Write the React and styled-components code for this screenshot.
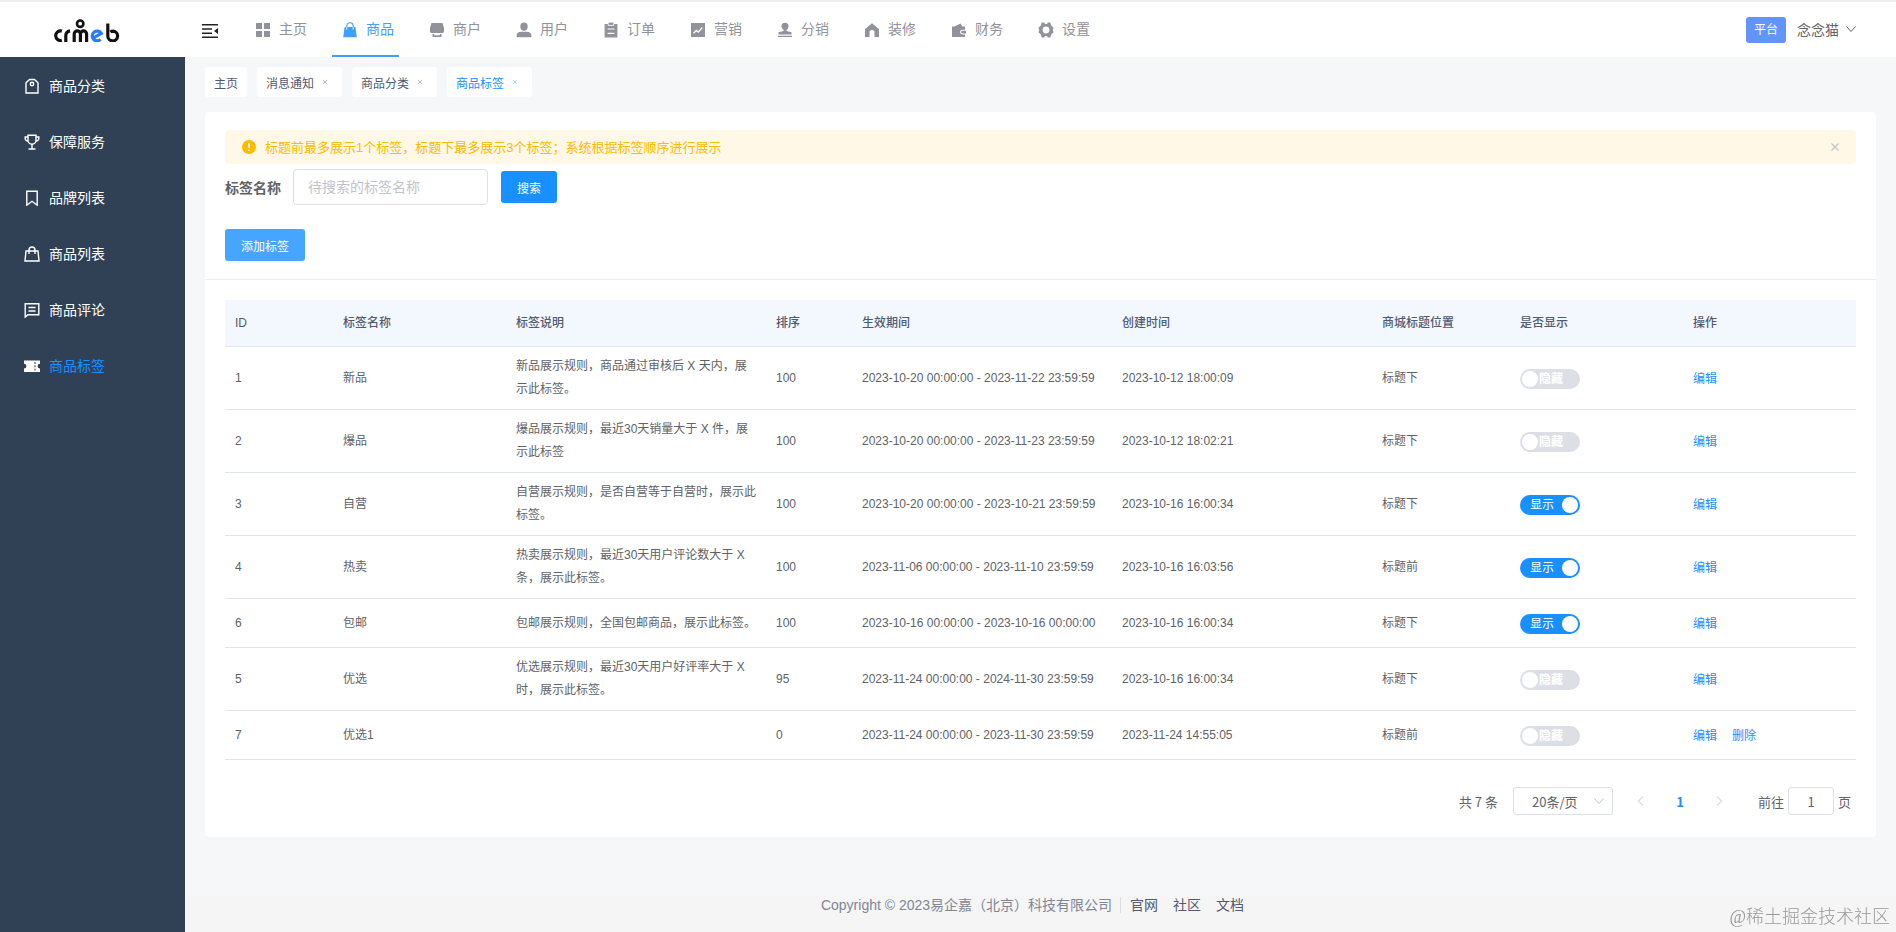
import React, { useState } from 'react';
import styled, { createGlobalStyle } from 'styled-components';

const navItems = [
    { key: 'home', label: '主页' },
    { key: 'goods', label: '商品' },
    { key: 'shop', label: '商户' },
    { key: 'user', label: '用户' },
    { key: 'order', label: '订单' },
    { key: 'marketing', label: '营销' },
    { key: 'spread', label: '分销' },
    { key: 'decorate', label: '装修' },
    { key: 'finance', label: '财务' },
    { key: 'setting', label: '设置' },
];

const menuItems = [
    { key: 'tag', label: '商品分类' },
    { key: 'trophy', label: '保障服务' },
    { key: 'bookmark', label: '品牌列表' },
    { key: 'bag', label: '商品列表' },
    { key: 'comment', label: '商品评论' },
    { key: 'ticket', label: '商品标签' },
];

const tabs = [
    { label: '主页' },
    { label: '消息通知', closable: true },
    { label: '商品分类', closable: true },
    { label: '商品标签', closable: true, active: true },
];

const columns = [
    { title: 'ID', width: 108 },
    { title: '标签名称', width: 173 },
    { title: '标签说明', width: 260 },
    { title: '排序', width: 86 },
    { title: '生效期间', width: 260 },
    { title: '创建时间', width: 260 },
    { title: '商城标题位置', width: 138 },
    { title: '是否显示', width: 173 },
    { title: '操作', width: 173 },
];

const labelRows = [
    { id: 1, name: '新品', info: '新品展示规则，商品通过审核后 X 天内，展示此标签。', sort: 100, period: '2023-10-20 00:00:00 - 2023-11-22 23:59:59', created: '2023-10-12 18:00:09', position: '标题下', show: false },
    { id: 2, name: '爆品', info: '爆品展示规则，最近30天销量大于 X 件，展示此标签', sort: 100, period: '2023-10-20 00:00:00 - 2023-11-23 23:59:59', created: '2023-10-12 18:02:21', position: '标题下', show: false },
    { id: 3, name: '自营', info: '自营展示规则，是否自营等于自营时，展示此标签。', sort: 100, period: '2023-10-20 00:00:00 - 2023-10-21 23:59:59', created: '2023-10-16 16:00:34', position: '标题下', show: true },
    { id: 4, name: '热卖', info: '热卖展示规则，最近30天用户评论数大于 X 条，展示此标签。', sort: 100, period: '2023-11-06 00:00:00 - 2023-11-10 23:59:59', created: '2023-10-16 16:03:56', position: '标题前', show: true },
    { id: 6, name: '包邮', info: '包邮展示规则，全国包邮商品，展示此标签。', sort: 100, period: '2023-10-16 00:00:00 - 2023-10-16 00:00:00', created: '2023-10-16 16:00:34', position: '标题下', show: true },
    { id: 5, name: '优选', info: '优选展示规则，最近30天用户好评率大于 X 时，展示此标签。', sort: 95, period: '2023-11-24 00:00:00 - 2024-11-30 23:59:59', created: '2023-10-16 16:00:34', position: '标题下', show: false },
    { id: 7, name: '优选1', info: '', sort: 0, period: '2023-11-24 00:00:00 - 2023-11-30 23:59:59', created: '2023-11-24 14:55:05', position: '标题前', show: false, removable: true },
];

const navShapes = {
    home: <path d="M1 1h6v6H1zM9 1h6v6H9zM1 9h6v6H1zM9 9h6v6H9z" />,
    goods: (
        <>
            <path d="M2.6 5h10.8l1.4 10.2H1.2z" />
            <path d="M4.8 7.5V4a3.2 3.2 0 0 1 6.4 0v3.5" fill="none" stroke="currentColor" strokeWidth="1.1" />
            <path d="M4.8 5.2v2.3M11.2 5.2v2.3" stroke="#fff" />
        </>
    ),
    shop: (
        <>
            <path d="M2.5 1h11L15 6v3.6c0 .8-.6 1.4-1.4 1.4H2.4C1.6 11 1 10.4 1 9.600V6z" />
            <path d="M3.5 12h1.7v1.3h5.6V12h1.7v3h-9z" />
        </>
    ),
    user: (
        <>
            <ellipse cx="8" cy="4.6" rx="3.7" ry="4.2" />
            <path d="M.6 15.3v-1.9c0-2.300 2-3.600 4.400-3.600h6c2.400 0 4.400 1.300 4.400 3.600v1.900z" />
        </>
    ),
    order: (
        <>
            <path d="M1.600 2h3.200v1.800h6.400V2h3.200v13.500H1.600z" />
            <path d="M5.600.6h4.800v2.300H5.600z" />
            <path d="M4.600 7h6.800M4.600 11.300h6.800" stroke="#fff" strokeWidth="1.200" />
        </>
    ),
    marketing: (
        <>
            <path d="M1 1h14v14H1z" />
            <path d="M3.500 11.300 6.300 8.500l2 1.700 4-4.700" fill="none" stroke="#fff" strokeWidth="1.300" />
        </>
    ),
    spread: (
        <>
            <circle cx="8" cy="4.200" r="3.500" />
            <path d="M6.500 6h3v3l5 1.300v2.200h-13v-2.200l5-1.300zM1 13.700h14V15H1z" />
        </>
    ),
    decorate: <path d="M8 1.200 15 7v8h-4.500v-4.500a2.500 2.500 0 0 0-5 0V15H1V7z" />,
    finance: (
        <>
            <path d="M1 4.500h2.500l6-3 2 3H14v3.200h-2.600a2.400 2.400 0 0 0 0 4.800H14V15H1z" />
            <path d="M11.500 8.700H15v2.800h-3.500a1.400 1.400 0 0 1 0-2.800z" />
        </>
    ),
    setting: (
        <path
            fillRule="evenodd"
            d="M3.700.6h2.500l.8 1.500h2L9.800.6h2.500l.8 3 2.500 2.200-.9 2.200.9 2.200-2.500 2.200-.8 3H9.800L9 13.900H7l-.8 1.500H3.700l-.8-3-2.500-2.200.9-2.200-.9-2.200 2.500-2.200zM8 4.600a3.400 3.400 0 1 0 0 6.800 3.400 3.400 0 0 0 0-6.800z"
        />
    ),
};

const menuShapes = {
    tag: (
        <>
            <path d="M2 15V4.800L5.600 1.500h4.800L14 4.800V15z" />
            <circle cx="8" cy="6" r="1.700" />
        </>
    ),
    trophy: (
        <>
            <path d="M4 1.300h8v4.900a4 4 0 0 1-8 0z" />
            <path d="M4 3H1.200v1.600A2.700 2.700 0 0 0 4.200 7M12 3h2.800v1.600A2.700 2.700 0 0 1 11.800 7M8 10.300v4.500M4.500 15h7" />
        </>
    ),
    bookmark: <path d="M2.800 1.200h10.400v14L8 11.300l-5.200 3.900z" />,
    bag: (
        <>
            <path d="M2 5h12l1 10H1z" />
            <path d="M5 8V4a3 3 0 0 1 6 0v4" />
        </>
    ),
    comment: (
        <>
            <path d="M1.200 15.200V1.800h13.600v11H3.800z" />
            <path d="M4.500 5.500h7M4.500 9h7" />
        </>
    ),
    ticket: (
        <>
            <path d="M0 2.500h16v3.300a2.300 2.300 0 0 0 0 4.800v3.400H0v-3.400a2.300 2.300 0 0 0 0-4.800z" fill="currentColor" stroke="none" />
            <path d="M11 4v2m0 1.300v2m0 1.300v2" stroke="#304156" strokeWidth="1" />
        </>
    ),
};

const Logo = () => (
    <svg width="68" height="25" viewBox="0 0 68 25" fill="none" stroke="#111" strokeWidth="3.200" role="img" aria-label="crmeb">
        <path d="M8.800 14.100a4.800 4.800 0 0 0-6.100 4.900 4.800 4.800 0 0 0 6.100 4.300" />
        <path d="M12.800 25v-6.200c0-2.600 1.600-4.400 4.200-4.900" />
        <path d="M21.200 25v-8a3.100 3.100 0 0 1 6.200 0v8M27.400 17a3.100 3.100 0 0 1 6.200 0v8" />
        <circle cx="27.200" cy="6.700" r="3.200" strokeWidth="2.600" />
        <path d="M40.500 20.800l7.800-4.400A4.900 4.900 0 1 0 47.600 22.400" stroke="#2d7cf6" />
        <path d="M54.800 6.500V19a4.900 4.900 0 1 0 5.400-4.900c-1.200 0-2 .3-2.800.9" />
    </svg>
);

const Chevron = ({ size = 12, direction = 'down' }) => {
    const d = {
        down: 'M1.500 3.500 6 8.500l4.500-5',
        left: 'M8 1.500 3.500 6 8 10.500',
        right: 'M4 1.500 8.500 6 4 10.500',
    }[direction];
    return (
        <svg width={size} height={size} viewBox="0 0 12 12" fill="none" stroke="currentColor" aria-hidden="true">
            <path d={d} />
        </svg>
    );
};

const Cross = ({ size }) => (
    <svg width={size} height={size} viewBox="0 0 10 10" fill="none" stroke="currentColor" strokeWidth="1.200" aria-hidden="true">
        <path d="M1.500 1.500l7 7M8.500 1.500l-7 7" />
    </svg>
);

const App = () => {
    const [rows, setRows] = useState(labelRows);
    const [keyword, setKeyword] = useState('');
    const [alertOpen, setAlertOpen] = useState(true);

    const toggleShow = (id) => {
        setRows(rows.map((row) => (row.id === id ? { ...row, show: !row.show } : row)));
    };

    return (
        <>
            <GlobalStyle />
            <Page>
                <Header>
                    <LogoBox>
                        <Logo />
                    </LogoBox>
                    <FoldButton type="button" aria-label="收起菜单">
                        <svg width="16" height="16" viewBox="0 0 16 16" fill="currentColor">
                            <path d="M0 1h16v1.500H0zM0 5.300h10v1.500H0zM0 9.600h10v1.500H0zM0 13.500h16V15H0zM16 5v6l-4-3z" />
                        </svg>
                    </FoldButton>
                    <Nav>
                        {navItems.map((item) => (
                            <NavLink href="#" key={item.key} $active={item.key === 'goods'}>
                                <svg width="16" height="16" viewBox="0 0 16 16" fill="currentColor" aria-hidden="true">
                                    {navShapes[item.key]}
                                </svg>
                                <span>{item.label}</span>
                            </NavLink>
                        ))}
                    </Nav>
                    <Account>
                        <Badge>平台</Badge>
                        <AccountButton type="button">
                            念念猫
                            <Chevron />
                        </AccountButton>
                    </Account>
                </Header>

                <Body>
                    <Sidebar>
                        {menuItems.map((item) => (
                            <MenuLink href="#" key={item.key} $active={item.key === 'ticket'}>
                                <svg width="16" height="16" viewBox="0 0 16 16" fill="none" stroke="currentColor" strokeWidth="1.400" aria-hidden="true">
                                    {menuShapes[item.key]}
                                </svg>
                                <span>{item.label}</span>
                            </MenuLink>
                        ))}
                    </Sidebar>

                    <Main>
                        <TabBar>
                            {tabs.map((tab) => (
                                <Tab key={tab.label} $active={tab.active} $closable={tab.closable}>
                                    <a href="#">{tab.label}</a>
                                    {tab.closable && (
                                        <PlainButton type="button" aria-label={`关闭${tab.label}`}>
                                            <Cross size={6} />
                                        </PlainButton>
                                    )}
                                </Tab>
                            ))}
                        </TabBar>

                        <Card>
                            <CardTop>
                                {alertOpen && (
                                    <Alert role="alert">
                                        <svg width="16" height="16" viewBox="0 0 16 16" aria-hidden="true">
                                            <circle cx="8" cy="8" r="7" fill="currentColor" />
                                            <path d="M8 4v5M8 10.500v1.600" stroke="#fff" strokeWidth="1.600" />
                                        </svg>
                                        <AlertText>标题前最多展示1个标签，标题下最多展示3个标签；系统根据标签顺序进行展示</AlertText>
                                        <PlainButton type="button" aria-label="关闭提示" onClick={() => setAlertOpen(false)}>
                                            <Cross size={10} />
                                        </PlainButton>
                                    </Alert>
                                )}
                                <SearchForm onSubmit={(e) => e.preventDefault()}>
                                    <label htmlFor="label-name">标签名称</label>
                                    <SearchInput
                                        id="label-name"
                                        placeholder="待搜索的标签名称"
                                        value={keyword}
                                        onChange={(e) => setKeyword(e.target.value)}
                                    />
                                    <PrimaryButton type="submit">搜索</PrimaryButton>
                                </SearchForm>
                                <PrimaryButton type="button" $light>添加标签</PrimaryButton>
                            </CardTop>

                            <CardContent>
                                <Table>
                                    <colgroup>
                                        {columns.map((col) => (
                                            <Col key={col.title} $width={col.width} />
                                        ))}
                                    </colgroup>
                                    <thead>
                                        <tr>
                                            {columns.map((col) => (
                                                <Th key={col.title} scope="col">{col.title}</Th>
                                            ))}
                                        </tr>
                                    </thead>
                                    <tbody>
                                        {rows.map((row) => (
                                            <tr key={row.id}>
                                                <Td>{row.id}</Td>
                                                <Td>{row.name}</Td>
                                                <Td>{row.info}</Td>
                                                <Td>{row.sort}</Td>
                                                <Td>{row.period}</Td>
                                                <Td>{row.created}</Td>
                                                <Td>{row.position}</Td>
                                                <ControlTd>
                                                    <Switch $on={row.show}>
                                                        <input
                                                            type="checkbox"
                                                            role="switch"
                                                            checked={row.show}
                                                            onChange={() => toggleShow(row.id)}
                                                        />
                                                        <span>{row.show ? '显示' : '隐藏'}</span>
                                                    </Switch>
                                                </ControlTd>
                                                <ControlTd>
                                                    <Actions>
                                                        <a href="#">编辑</a>
                                                        {row.removable && <a href="#">删除</a>}
                                                    </Actions>
                                                </ControlTd>
                                            </tr>
                                        ))}
                                    </tbody>
                                </Table>

                                <Pagination>
                                    <span>共 7 条</span>
                                    <SelectBox>
                                        <select aria-label="每页条数" defaultValue="20">
                                            <option value="20">20条/页</option>
                                            <option value="40">40条/页</option>
                                        </select>
                                        <Chevron />
                                    </SelectBox>
                                    <Pager>
                                        <PlainButton type="button" aria-label="上一页" disabled>
                                            <Chevron direction="left" />
                                        </PlainButton>
                                        <PageNumber type="button">1</PageNumber>
                                        <PlainButton type="button" aria-label="下一页" disabled>
                                            <Chevron direction="right" />
                                        </PlainButton>
                                    </Pager>
                                    <Jump>
                                        前往
                                        <input type="text" defaultValue="1" />
                                        页
                                    </Jump>
                                </Pagination>
                            </CardContent>
                        </Card>

                        <Footer>
                            <span>Copyright © 2023易企嘉（北京）科技有限公司</span>
                            <FooterLinks>
                                <a href="#">官网</a>
                                <a href="#">社区</a>
                                <a href="#">文档</a>
                            </FooterLinks>
                        </Footer>
                    </Main>
                </Body>
                <Watermark>@稀土掘金技术社区</Watermark>
            </Page>
        </>
    );
};

export default App;

const GlobalStyle = createGlobalStyle`
  * {
    box-sizing: border-box;
  }

  body {
    margin: 0;
    background: #f5f5f5;
    color: #606266;
    font-family: "Liberation Sans", "Noto Sans CJK SC", sans-serif;
    font-size: 14px;
  }

  button, input, select {
    font-family: inherit;
    font-size: inherit;
    color: inherit;
  }

  button {
    cursor: pointer;
  }

  a {
    color: inherit;
    text-decoration: none;
  }

  svg {
    display: block;
    flex: none;
  }
`;

const Page = styled.div`
  display: flex;
  flex-direction: column;
  min-height: 100vh;
`;

const Header = styled.header`
  display: flex;
  align-items: stretch;
  height: 57px;
  padding-right: 39px;
  background: #fff;
  box-shadow: inset 0 2px 0 #f0f0f0;
`;

const LogoBox = styled.div`
  display: flex;
  align-items: center;
  width: 185px;
  padding: 2px 0 0 53px;
`;

const PlainButton = styled.button`
  display: flex;
  align-items: center;
  justify-content: center;
  padding: 0;
  border: none;
  background: none;
  color: #c0c4cc;
`;

const FoldButton = styled(PlainButton)`
  margin: 4px 27px 0 17px;
  color: #222;
`;

const Nav = styled.nav`
  display: flex;
  gap: 20px;
`;

const NavLink = styled.a`
  display: flex;
  align-items: center;
  gap: 8px;
  padding: 4px 5px 0 10px;
  border-bottom: 2px solid ${(props) => (props.$active ? '#409eff' : 'transparent')};
  color: ${(props) => (props.$active ? '#409eff' : '#909399')};

  span {
    padding-bottom: 4px;
  }
`;

const Account = styled.div`
  display: flex;
  align-items: center;
  gap: 11px;
  margin-left: auto;
  padding-top: 2px;
`;

const Badge = styled.span`
  padding: 0 8px;
  border-radius: 3px;
  background: #6394f9;
  color: #fff;
  font-size: 12px;
  line-height: 26px;
`;

const AccountButton = styled(PlainButton)`
  gap: 6px;
  padding-bottom: 2px;
  color: #606266;
`;

const Body = styled.div`
  display: flex;
  flex: 1;
`;

const Sidebar = styled.aside`
  flex: none;
  width: 185px;
  padding-top: 1px;
  background: #304156;
`;

const MenuLink = styled.a`
  display: flex;
  align-items: center;
  gap: 9px;
  height: 56px;
  padding-left: 24px;
  color: #fff;

  span {
    padding-bottom: 2px;
    color: ${(props) => (props.$active ? '#1890ff' : '#fff')};
  }
`;

const Main = styled.main`
  display: flex;
  flex: 1;
  flex-direction: column;
  min-width: 0;
  background: #f5f7f9;
`;

const TabBar = styled.div`
  display: flex;
  gap: 10px;
  padding: 10px 20px 15px;
`;

const Tab = styled.div`
  display: flex;
  align-items: center;
  gap: 8px;
  height: 30px;
  padding: 0 ${(props) => (props.$closable ? '14px' : '9px')} 0 9px;
  border-radius: 3px;
  background: #fff;
  color: ${(props) => (props.$active ? '#1890ff' : '#515a6e')};
  font-size: 12px;

  button {
    color: ${(props) => (props.$active ? '#8fc4f5' : '#999')};
  }
`;

const Card = styled.section`
  margin: 0 20px;
  border-radius: 4px;
  background: #fff;
`;

const CardTop = styled.div`
  padding: 18px 20px;
  border-bottom: 1px solid #ebeef5;
`;

const Alert = styled.div`
  display: flex;
  align-items: center;
  gap: 8px;
  height: 34px;
  padding: 0 16px;
  border-radius: 4px;
  background: #fff8e6;
  color: #ffba00;
`;

const AlertText = styled.span`
  flex: 1;
  padding-bottom: 2px;
  font-size: 13px;
`;

const SearchForm = styled.form`
  display: flex;
  align-items: center;
  margin: 5px 0 24px;

  label {
    margin-right: 12px;
    font-weight: bold;
  }
`;

const SearchInput = styled.input`
  width: 195px;
  height: 36px;
  margin-right: 13px;
  padding: 0 14px;
  border: 1px solid #dcdfe6;
  border-radius: 4px;
  outline: none;

  &::placeholder {
    color: #c0c4cc;
  }
`;

const PrimaryButton = styled.button`
  height: 32px;
  padding: 0 16px;
  border: none;
  border-radius: 3px;
  background: ${(props) => (props.$light ? '#46a6ff' : '#1890ff')};
  color: #fff;
  font-size: 12px;
`;

const CardContent = styled.div`
  padding: 20px 20px 22px;
`;

const Table = styled.table`
  width: 100%;
  border-collapse: separate;
  border-spacing: 0;
  table-layout: fixed;
  font-size: 12px;
  line-height: 23px;
`;

const Col = styled.col`
  width: ${(props) => props.$width}px;
`;

const Th = styled.th`
  height: 47px;
  padding: 0 10px;
  border-bottom: 1px solid #dfe6ec;
  background: #f3f8fe;
  color: #515a6e;
  font-weight: 500;
  text-align: left;
`;

const Td = styled.td`
  height: 49px;
  padding: 8px 10px;
  border-bottom: 1px solid #dfe6ec;
  vertical-align: middle;
`;

const ControlTd = styled(Td)`
  padding: 10px 10px 8px;
`;

const Switch = styled.label`
  display: flex;
  align-items: center;
  flex-direction: ${(props) => (props.$on ? 'row-reverse' : 'row')};
  justify-content: ${(props) => (props.$on ? 'space-between' : 'flex-start')};
  gap: 1px;
  width: 60px;
  height: 20px;
  padding: 0 2px 0 ${(props) => (props.$on ? '10px' : '2px')};
  border-radius: 10px;
  background: ${(props) => (props.$on ? '#1890ff' : '#dcdfe6')};
  color: #fff;
  font-weight: ${(props) => (props.$on ? 'normal' : 'bold')};
  cursor: pointer;

  input {
    appearance: none;
    width: 16px;
    height: 16px;
    margin: 0;
    border-radius: 50%;
    background: #fff;
  }
`;

const Actions = styled.div`
  display: flex;
  gap: 15px;
  color: #1890ff;
`;

const Pagination = styled.div`
  display: flex;
  align-items: center;
  justify-content: flex-end;
  margin-top: 27px;
  padding-right: 5px;
  font-family: "Noto Sans CJK SC", sans-serif;
  font-size: 13px;
`;

const SelectBox = styled.div`
  display: flex;
  align-items: center;
  width: 100px;
  height: 28px;
  margin-left: 15px;
  padding: 0 7px 0 18px;
  border: 1px solid #dcdfe6;
  border-radius: 3px;
  color: #c0c4cc;

  select {
    flex: 1;
    min-width: 0;
    padding: 0;
    border: none;
    outline: none;
    background: none;
    color: #606266;
    appearance: none;
  }
`;

const Pager = styled.div`
  display: flex;
  align-items: center;
  justify-content: space-between;
  width: 90px;
  margin: 0 33px 0 22px;
`;

const PageNumber = styled(PlainButton)`
  color: #1890ff;
  font-weight: bold;
`;

const Jump = styled.label`
  display: flex;
  align-items: center;
  gap: 4px;

  input {
    width: 46px;
    height: 28px;
    padding: 0;
    border: 1px solid #dcdfe6;
    border-radius: 3px;
    outline: none;
    text-align: center;
  }
`;

const Footer = styled.footer`
  display: flex;
  justify-content: center;
  height: 36px;
  margin-top: auto;
  padding: 1px 16px 0 0;
  background: #f5f5f5;
  color: #808695;
  line-height: 16px;
`;

const FooterLinks = styled.div`
  display: flex;
  gap: 15px;
  height: 16px;
  margin-left: 8px;
  padding-left: 9px;
  border-left: 1px solid #dcdee2;
  color: #515a6e;
`;

const Watermark = styled.div`
  position: fixed;
  right: 6px;
  bottom: 3px;
  color: #999;
  font-family: "Liberation Serif", "Noto Sans CJK SC", serif;
  font-size: 18px;
  font-weight: 300;
  line-height: 24px;
  pointer-events: none;
`;
